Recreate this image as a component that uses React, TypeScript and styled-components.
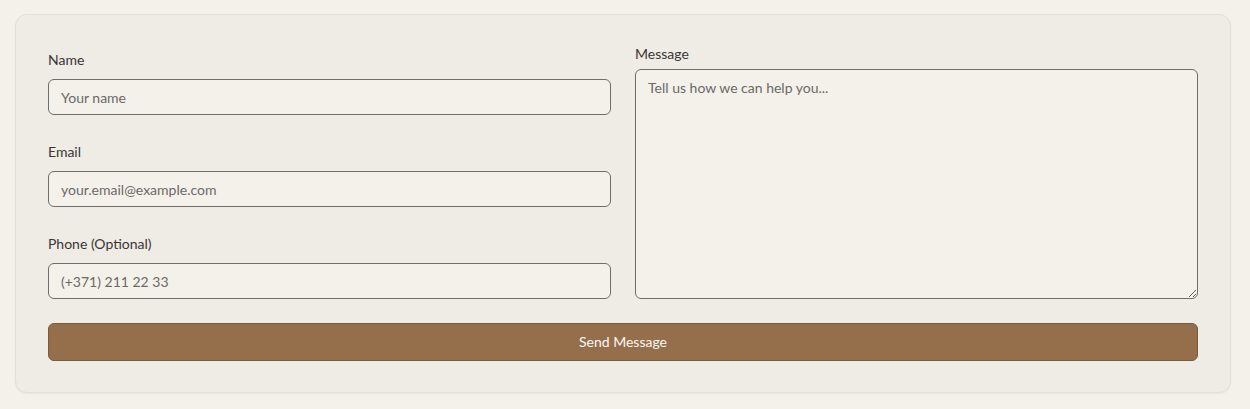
import React from "react";
import styled, { createGlobalStyle } from "styled-components";

const GlobalStyle = createGlobalStyle`
  html, body {
    margin: 0;
    padding: 0;
    background: #f4f1eb;
    font-family: Lato, "Open Sans", sans-serif;
  }
`;

const App: React.FC = () => {
  return (
    <>
      <GlobalStyle />
      <Page>
        <Card>
          <Form onSubmit={(e) => e.preventDefault()}>
            <Columns>
              <LeftColumn>
                <Field>
                  <Label htmlFor="name">Name</Label>
                  <Input id="name" type="text" placeholder="Your name" />
                </Field>
                <Field>
                  <Label htmlFor="email">Email</Label>
                  <Input id="email" type="email" placeholder="your.email@example.com" />
                </Field>
                <Field>
                  <Label htmlFor="phone">Phone (Optional)</Label>
                  <Input id="phone" type="tel" placeholder="(+371) 211 22 33" />
                </Field>
              </LeftColumn>
              <RightColumn>
                <Label htmlFor="message" tight>
                  Message
                </Label>
                <TextArea id="message" placeholder="Tell us how we can help you..." />
              </RightColumn>
            </Columns>
            <SubmitButton type="submit">Send Message</SubmitButton>
          </Form>
        </Card>
      </Page>
    </>
  );
};

export default App;

// Styled components
const Page = styled.div`
  padding: 14px 19px 16px 15px;
`;

const Card = styled.div`
  width: 1216px;
  box-sizing: border-box;
  background: #efebe5;
  border: 1px solid #e4dfd8;
  border-radius: 12px;
  box-shadow: 0 1px 2px rgba(0, 0, 0, 0.05);
  padding: 30px 32px 31px;
`;

const Form = styled.form`
  display: flex;
  flex-direction: column;
  gap: 24px;
`;

const Columns = styled.div`
  display: grid;
  grid-template-columns: 1fr 1fr;
  gap: 24px;
`;

const LeftColumn = styled.div`
  display: flex;
  flex-direction: column;
  gap: 28px;
  padding-top: 6px;
`;

const RightColumn = styled.div`
  display: flex;
  flex-direction: column;
`;

const Field = styled.div`
  display: flex;
  flex-direction: column;
`;

const Label = styled.label<{ tight?: boolean }>`
  font-size: 14px;
  line-height: ${({ tight }) => (tight ? "17px" : "18px")};
  margin-bottom: ${({ tight }) => (tight ? "7px" : "10px")};
  color: #3a3734;
`;

const Input = styled.input`
  height: 36px;
  box-sizing: border-box;
  padding: 0 12px;
  background: #f4f1eb;
  border: 1px solid #6f6d6a;
  border-radius: 6px;
  font-family: Lato, sans-serif;
  font-size: 14px;
  color: #333;
  outline: none;

  &::placeholder {
    color: #6b6966;
  }
`;

const TextArea = styled.textarea`
  height: 230px;
  box-sizing: border-box;
  padding: 8px 12px;
  background: #f4f1eb;
  border: 1px solid #6f6d6a;
  border-radius: 6px;
  font-family: Lato, sans-serif;
  font-size: 14px;
  line-height: 20px;
  color: #333;
  resize: vertical;
  outline: none;

  &::placeholder {
    color: #6b6966;
  }
`;

const SubmitButton = styled.button`
  height: 38px;
  padding: 0 0 2px;
  background: #956f4c;
  border: 1px solid #7b5a3b;
  border-radius: 6px;
  color: #fbf8f3;
  font-family: Lato, sans-serif;
  font-size: 14px;
  cursor: pointer;
`;
